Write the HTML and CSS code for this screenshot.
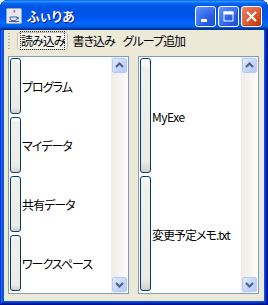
FILE: index.html
```html
<!DOCTYPE html>
<html lang="ja">
<head>
  <meta charset="UTF-8">
  <title>ふぃりあ</title>
  <link rel="stylesheet" href="styles.css">
</head>
<body>
  <div class="window">
    <div class="titlebar">
      <svg class="app-icon" width="16" height="16" viewBox="0 0 16 16">
        <rect x="0.5" y="0.5" width="15" height="15" rx="1" fill="#e4e8f0" stroke="#9aa6bc"/>
        <path d="M8 2 C6 4 10 5 7.5 8 C9.5 6.5 7 5 9.5 3 Z" fill="#e2441c"/>
        <path d="M4 9 h7 v1.5 c0 1.5 -1.5 2 -3.5 2 s-3.5 -0.5 -3.5 -2 Z" fill="none" stroke="#3a5ca8" stroke-width="1"/>
        <path d="M11 9.5 h1.3 v1.3 h-1.3" fill="none" stroke="#3a5ca8" stroke-width="1"/>
        <path d="M3 13.5 h10" stroke="#3a5ca8" stroke-width="1"/>
      </svg>
      <span class="title">ふぃりあ</span>
      <div class="caption-btns">
        <div class="cap-btn">
          <svg width="19" height="19" viewBox="0 0 19 19"><rect x="5" y="12" width="6" height="3" fill="#fff"/></svg>
        </div>
        <div class="cap-btn">
          <svg width="19" height="19" viewBox="0 0 19 19"><rect x="5" y="5" width="9" height="9" fill="none" stroke="#fff" stroke-width="1"/><rect x="4.5" y="4.5" width="10" height="3" fill="#fff"/></svg>
        </div>
        <div class="cap-btn close">
          <svg width="19" height="19" viewBox="0 0 19 19"><path d="M5 5 L14 14 M14 5 L5 14" stroke="#fff" stroke-width="2.2"/></svg>
        </div>
      </div>
    </div>

    <div class="toolbar">
      <span class="grip"></span>
      <span class="tool active"><span class="focus">読み込み</span></span>
      <span class="tool">書き込み</span>
      <span class="tool">グループ追加</span>
    </div>

    <div class="panes">
      <div class="pane">
        <div class="list">
          <div class="item"><span class="handle"></span><span class="label">プログラム</span></div>
          <div class="item"><span class="handle"></span><span class="label">マイデータ</span></div>
          <div class="item"><span class="handle"></span><span class="label">共有データ</span></div>
          <div class="item"><span class="handle"></span><span class="label">ワークスペース</span></div>
        </div>
        <div class="scrollbar">
          <div class="arrow"><svg width="13" height="13" viewBox="0 0 13 13"><path d="M3 8 L6.5 4.5 L10 8" fill="none" stroke="#4d6185" stroke-width="2"/></svg></div>
          <div class="arrow"><svg width="13" height="13" viewBox="0 0 13 13"><path d="M3 5 L6.5 8.5 L10 5" fill="none" stroke="#4d6185" stroke-width="2"/></svg></div>
        </div>
      </div>
      <div class="pane">
        <div class="list">
          <div class="item"><span class="handle"></span><span class="label latin">MyExe</span></div>
          <div class="item"><span class="handle"></span><span class="label">変更予定メモ.txt</span></div>
        </div>
        <div class="scrollbar">
          <div class="arrow"><svg width="13" height="13" viewBox="0 0 13 13"><path d="M3 8 L6.5 4.5 L10 8" fill="none" stroke="#4d6185" stroke-width="2"/></svg></div>
          <div class="arrow"><svg width="13" height="13" viewBox="0 0 13 13"><path d="M3 5 L6.5 8.5 L10 5" fill="none" stroke="#4d6185" stroke-width="2"/></svg></div>
        </div>
      </div>
    </div>
  </div>
</body>
</html>
```

FILE: styles.css
```css
html, body { margin: 0; padding: 0; background: #fff; }
body { font-family: "Noto Sans CJK JP", sans-serif; font-size: 12px; color: #000; }

.window { width: 268px; height: 305px; box-sizing: border-box; display: flex; flex-direction: column; padding: 0 4px 4px; background: #ece9d8; border-radius: 8px 8px 0 0; overflow: hidden;
  box-shadow: inset -1px -1px #00138c, inset 1px 1px #0831d9, inset -2px -2px #001ea0, inset 2px 2px #166aee, inset -3px -3px #003bda, inset 3px 3px #0855dd, inset -4px -4px #0855dd, inset 4px 4px #0855dd; }

.titlebar { height: 30px; margin: 0 -4px; padding: 0 6px; display: flex; align-items: center; border-radius: 7px 7px 0 0;
  background: linear-gradient(to bottom, #0058ee 0%, #3593ff 4%, #288eff 6%, #127dff 8%, #036ffc 10%, #0262ee 14%, #0057e5 20%, #0054e3 24%, #0055eb 56%, #005bf5 66%, #026afe 76%, #0062ef 86%, #0052d6 92%, #0040ab 94%, #003092 100%); }
.app-icon { flex: 0 0 auto; margin-top: 1px; }
.title { margin-left: 5px; color: #fff; font-weight: bold; font-size: 13px; font-feature-settings: "palt"; text-shadow: 1px 1px #0f1089; }
.caption-btns { margin-left: auto; display: flex; gap: 2px; margin-top: 3px; }
.cap-btn { width: 19px; height: 19px; border: 1px solid #fff; border-radius: 3px;
  background: radial-gradient(circle at 90% 90%, #1e4fd8 0%, #2c62ea 40%, #4f85f8 80%, #6a9bff 100%); box-shadow: inset -1px -1px #2050d0; }
.cap-btn svg { display: block; }
.cap-btn.close { background: radial-gradient(circle at 90% 90%, #c03a10 0%, #d9522b 40%, #e67254 80%, #f09478 100%); box-shadow: inset -1px -1px #b63a15; }

.toolbar { height: 23px; display: flex; align-items: flex-start; padding: 2px 0 0 4px; box-sizing: border-box; }
.grip { width: 2px; height: 16px; margin: 1px 7px 0 0; background: linear-gradient(#b2ae9d 50%, transparent 50%) 0 0 / 2px 3px repeat-y; }
.tool { height: 18px; box-sizing: border-box; border: 1px solid transparent; padding: 0 3px; line-height: 16px; font-feature-settings: "palt"; letter-spacing: -1px; white-space: nowrap; }
.tool.active { border-color: #c5c2b4; border-radius: 3px; background: #f4f3ee; }
.focus { outline: 1px dotted #333; outline-offset: 0; }

.panes { flex: 1; display: flex; gap: 9px; padding: 3px 5px 7px 4px; min-height: 0; }
.pane { flex: 1; display: flex; border: 1px solid #7f9db9; background: #fff; min-width: 0; }
.list { flex: 1; display: flex; flex-direction: column; min-width: 0; }
.item { flex: 1; display: flex; align-items: center; }
.handle { align-self: stretch; width: 11px; margin: 1px 1px 2px 1px; box-sizing: border-box; border: 1px solid #003c74; border-radius: 3px;
  background: linear-gradient(to bottom, #fff 0%, #f0f0ea 8%, #ecebe5 90%, #d6d0c5 100%); }
.label { white-space: nowrap; font-feature-settings: "palt"; letter-spacing: -1px; }
.label.latin { letter-spacing: -0.5px; }

.scrollbar { width: 17px; display: flex; flex-direction: column; justify-content: space-between; background: linear-gradient(to right, #eeede5 0%, #f3f1ec 40%, #fefefb 100%); }
.arrow { width: 15px; height: 15px; margin: 1px; box-sizing: border-box; border: 1px solid #b7caf5; border-radius: 2px; display: flex; align-items: center; justify-content: center;
  background: linear-gradient(135deg, #e1eafe 0%, #c8d7fc 50%, #b4c8f6 100%); }
.arrow svg { display: block; }
```
